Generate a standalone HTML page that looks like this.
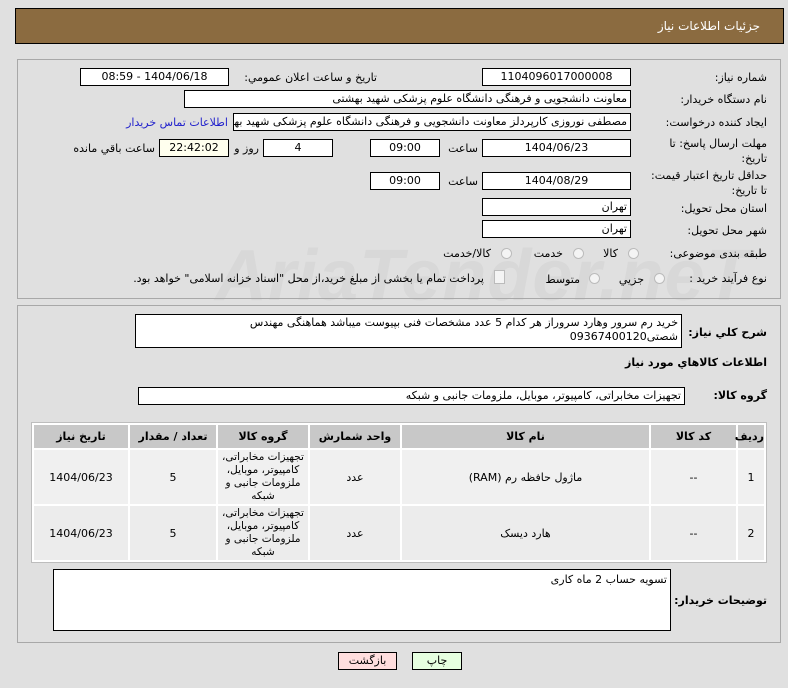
<!DOCTYPE html>
<html><head><meta charset="utf-8">
<style>
body{margin:0;width:788px;height:688px;background:#e0e0e0;font-family:"DejaVu Sans","Noto Sans CJK SC",sans-serif;font-size:11px;color:#000;position:relative;overflow:hidden}
.a{position:absolute}
.box{position:absolute;background:#fff;border:1px solid #000;box-sizing:border-box;height:18px;line-height:16px;text-align:center;direction:rtl;white-space:nowrap;overflow:hidden;font-size:11px}
.r{text-align:right;padding-right:3px}
.lbl{position:absolute;direction:rtl;text-align:right;white-space:nowrap;font-size:11px}
.panel{position:absolute;border:1px solid #a8a8a8;box-sizing:border-box;left:17px;width:764px}
.rad{position:absolute;width:11px;height:11px;border-radius:50%;border:1px solid #bbb;background:#f4f4f4;box-sizing:border-box}
table{position:absolute;left:31px;top:422px;width:736px;table-layout:fixed;border-collapse:separate;border-spacing:2px;border:1px solid #bdbdbd;direction:rtl;font-size:11px;background:#fff}
th{background:#c8c8c8;height:23px;font-weight:bold;font-size:11px;padding:0}
td{text-align:center;height:54px;padding:0;overflow:hidden}
td .g{height:54px;overflow:hidden;font-size:10.5px;line-height:13px;display:flex;align-items:center;justify-content:center}
tr.o td{background:#f0f0f0}
tr.e td{background:#ececec}
.btn{position:absolute;border:1px solid #000;box-sizing:border-box;height:18px;line-height:16px;text-align:center;font-size:11px}
</style></head><body>
<div class="a" style="left:15px;top:8px;width:769px;height:36px;background:#8b6b40;border:1px solid #000;box-sizing:border-box"></div>
<div class="lbl" style="right:28px;top:19px;color:#fff;font-size:12px">جزئیات اطلاعات نیاز</div>

<div class="a" style="left:215px;top:235px;font-size:72px;font-weight:bold;font-style:italic;color:#d8d8d8;font-family:'Liberation Sans',sans-serif;letter-spacing:1px;white-space:nowrap">AriaTender.neT</div>

<div class="panel" style="top:59px;height:240px"></div>
<div class="panel" style="top:305px;height:338px"></div>

<div class="lbl" style="right:21px;top:71px">شماره نیاز:</div>
<div class="box" style="left:482px;top:68px;width:149px">1104096017000008</div>
<div class="lbl" style="right:411px;top:71px">تاریخ و ساعت اعلان عمومي:</div>
<div class="box" style="left:80px;top:68px;width:149px">1404/06/18 - 08:59</div>

<div class="lbl" style="right:21px;top:93px">نام دستگاه خریدار:</div>
<div class="box r" style="left:184px;top:90px;width:447px">معاونت دانشجویی و فرهنگی دانشگاه علوم پزشکی شهید بهشتی</div>

<div class="lbl" style="right:21px;top:116px">ایجاد کننده درخواست:</div>
<div class="box r" style="left:233px;top:113px;width:398px">مصطفی نوروزی کارپردلز معاونت دانشجویی و فرهنگی دانشگاه علوم پزشکی شهید بهشتی</div>
<div class="lbl" style="right:560px;top:116px;color:#2222cc">اطلاعات تماس خریدار</div>

<div class="lbl" style="right:21px;top:136px;line-height:15px">مهلت ارسال پاسخ: تا<br>تاریخ:</div>
<div class="box" style="left:482px;top:139px;width:149px">1404/06/23</div>
<div class="lbl" style="right:310px;top:142px">ساعت</div>
<div class="box" style="left:370px;top:139px;width:70px">09:00</div>
<div class="box" style="left:263px;top:139px;width:70px">4</div>
<div class="lbl" style="right:529px;top:142px">روز و</div>
<div class="box" style="left:159px;top:139px;width:70px;background:#ffffee">22:42:02</div>
<div class="lbl" style="right:633px;top:142px">ساعت باقي مانده</div>

<div class="lbl" style="right:21px;top:168px;line-height:15px">حداقل تاریخ اعتبار قیمت:<br>تا تاریخ:</div>
<div class="box" style="left:482px;top:172px;width:149px">1404/08/29</div>
<div class="lbl" style="right:310px;top:175px">ساعت</div>
<div class="box" style="left:370px;top:172px;width:70px">09:00</div>

<div class="lbl" style="right:21px;top:202px">استان محل تحویل:</div>
<div class="box r" style="left:482px;top:198px;width:149px">تهران</div>
<div class="lbl" style="right:21px;top:224px">شهر محل تحویل:</div>
<div class="box r" style="left:482px;top:220px;width:149px">تهران</div>

<div class="lbl" style="right:21px;top:247px">طبقه بندی موضوعی:</div>
<div class="rad" style="left:628px;top:248px"></div><div class="lbl" style="right:170px;top:247px">کالا</div>
<div class="rad" style="left:573px;top:248px"></div><div class="lbl" style="right:225px;top:247px">خدمت</div>
<div class="rad" style="left:501px;top:248px"></div><div class="lbl" style="right:297px;top:247px">کالا/خدمت</div>

<div class="lbl" style="right:21px;top:272px">نوع فرآیند خرید :</div>
<div class="rad" style="left:654px;top:273px"></div><div class="lbl" style="right:144px;top:273px">جزیي</div>
<div class="rad" style="left:589px;top:273px"></div><div class="lbl" style="right:208px;top:273px">متوسط</div>
<div class="a" style="left:494px;top:270px;width:9px;height:12px;border:1px solid #bbb;background:#f4f4f4"></div>
<div class="lbl" style="right:304px;top:272px">پرداخت تمام یا بخشی از مبلغ خرید،از محل "اسناد خزانه اسلامی" خواهد بود.</div>

<div class="lbl" style="right:21px;top:326px;font-weight:bold">شرح کلي نیاز:</div>
<div class="box r" style="left:135px;top:314px;width:547px;height:34px;white-space:normal;line-height:14px;padding-top:1px">خرید رم سرور وهارد سروراز هر کدام 5 عدد مشخصات فنی بپیوست میباشد هماهنگی مهندس<br>شصتی09367400120</div>
<div class="lbl" style="right:21px;top:356px;font-weight:bold">اطلاعات کالاهاي مورد نیاز</div>
<div class="lbl" style="right:21px;top:389px;font-weight:bold">گروه کالا:</div>
<div class="box r" style="left:138px;top:387px;width:547px">تجهیزات مخابراتی، کامپیوتر، موبایل، ملزومات جانبی و شبکه</div>

<table>
<colgroup><col style="width:26px"><col style="width:85px"><col style="width:247px"><col style="width:90px"><col style="width:90px"><col style="width:86px"><col></colgroup>
<tr><th>ردیف</th><th>کد کالا</th><th>نام کالا</th><th>واحد شمارش</th><th>گروه کالا</th><th>تعداد / مقدار</th><th>تاریخ نیاز</th></tr>
<tr class="o"><td>1</td><td>--</td><td>ماژول حافظه رم (RAM)</td><td>عدد</td><td><div class="g">تجهیزات مخابراتی، کامپیوتر، موبایل، ملزومات جانبی و شبکه</div></td><td>5</td><td>1404/06/23</td></tr>
<tr class="e"><td>2</td><td>--</td><td>هارد دیسک</td><td>عدد</td><td><div class="g">تجهیزات مخابراتی، کامپیوتر، موبایل، ملزومات جانبی و شبکه</div></td><td>5</td><td>1404/06/23</td></tr>
</table>

<div class="lbl" style="right:21px;top:594px;font-weight:bold">توضیحات خریدار:</div>
<div class="box r" style="left:53px;top:569px;width:618px;height:62px;line-height:16px;padding-top:2px">تسویه حساب 2 ماه کاری</div>

<div class="btn" style="left:338px;top:652px;width:59px;background:#ffdede">بازگشت</div>
<div class="btn" style="left:412px;top:652px;width:50px;background:#e6ffe0">چاپ</div>
</body></html>
